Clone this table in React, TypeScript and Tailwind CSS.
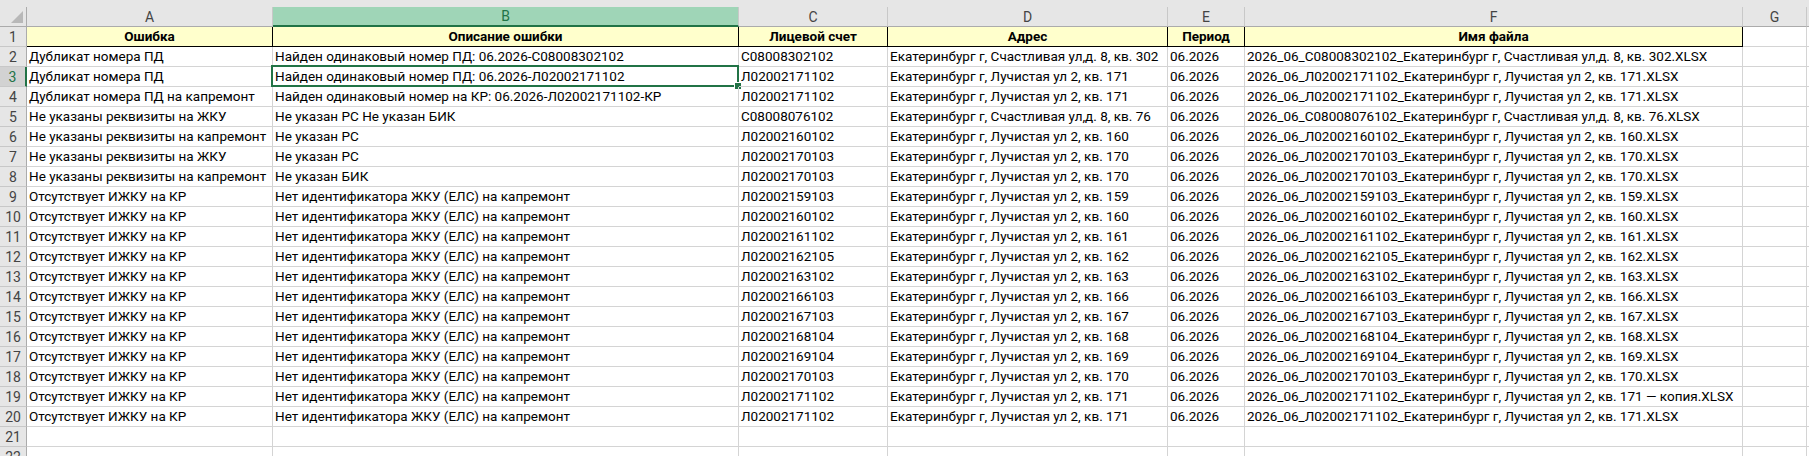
const COLS = ["A", "B", "C", "D", "E", "F", "G"];

const HEAD = ["Ошибка", "Описание ошибки", "Лицевой счет", "Адрес", "Период", "Имя файла"];

const LUCH = "Екатеринбург г, Лучистая ул 2, кв. ";
const NO_ID = "Нет идентификатора ЖКУ (ЕЛС) на капремонт";
const OTS = "Отсутствует ИЖКУ на КР";

function luchRow(err: string, desc: string, acc: string, flat: string, suffix = "") {
  return [err, desc, acc, LUCH + flat, "06.2026", `2026_06_${acc}_${LUCH}${flat}${suffix}.XLSX`];
}

const ROWS: string[][] = [
  [
    "Дубликат номера ПД",
    "Найден одинаковый номер ПД: 06.2026-С08008302102",
    "С08008302102",
    "Екатеринбург г, Счастливая ул,д. 8, кв. 302",
    "06.2026",
    "2026_06_С08008302102_Екатеринбург г, Счастливая ул,д. 8, кв. 302.XLSX",
  ],
  luchRow("Дубликат номера ПД", "Найден одинаковый номер ПД: 06.2026-Л02002171102", "Л02002171102", "171"),
  luchRow("Дубликат номера ПД на капремонт", "Найден одинаковый номер на КР: 06.2026-Л02002171102-КР", "Л02002171102", "171"),
  [
    "Не указаны реквизиты на ЖКУ",
    "Не указан РС Не указан БИК",
    "С08008076102",
    "Екатеринбург г, Счастливая ул,д. 8, кв. 76",
    "06.2026",
    "2026_06_С08008076102_Екатеринбург г, Счастливая ул,д. 8, кв. 76.XLSX",
  ],
  luchRow("Не указаны реквизиты на капремонт", "Не указан РС", "Л02002160102", "160"),
  luchRow("Не указаны реквизиты на ЖКУ", "Не указан РС", "Л02002170103", "170"),
  luchRow("Не указаны реквизиты на капремонт", "Не указан БИК", "Л02002170103", "170"),
  luchRow(OTS, NO_ID, "Л02002159103", "159"),
  luchRow(OTS, NO_ID, "Л02002160102", "160"),
  luchRow(OTS, NO_ID, "Л02002161102", "161"),
  luchRow(OTS, NO_ID, "Л02002162105", "162"),
  luchRow(OTS, NO_ID, "Л02002163102", "163"),
  luchRow(OTS, NO_ID, "Л02002166103", "166"),
  luchRow(OTS, NO_ID, "Л02002167103", "167"),
  luchRow(OTS, NO_ID, "Л02002168104", "168"),
  luchRow(OTS, NO_ID, "Л02002169104", "169"),
  luchRow(OTS, NO_ID, "Л02002170103", "170"),
  luchRow(OTS, NO_ID, "Л02002171102", "171", " — копия"),
  luchRow(OTS, NO_ID, "Л02002171102", "171"),
];

const grid = "grid grid-cols-[27px_246px_466px_149px_280px_77px_498px_64px_1fr]";

function RowHead({ n, active }: { n: number; active?: boolean }) {
  return (
    <div
      className={
        "h-[20px] flex items-center justify-center border-b border-[#c8c8c8] text-[14px] " +
        (active
          ? "bg-[#d2d2d2] text-[#217346] border-r-2 border-r-[#217346]"
          : "bg-[#e6e6e6] text-[#444] border-r border-r-[#ababab]")
      }
    >
      {n}
    </div>
  );
}

export default function App() {
  return (
    <div className="w-[1809px] h-[456px] overflow-hidden bg-white text-[13.5px] leading-none text-black font-['Roboto','Liberation_Sans',sans-serif]">
      {/* strip above column letters */}
      <div className="h-[7px] bg-[#e6e6e6]" />

      {/* column letters */}
      <div className={grid + " text-[14px]"}>
        <div className="h-[20px] bg-[#e6e6e6] border-r border-b border-[#ababab] relative">
          <svg className="absolute right-[3px] bottom-[3px]" width="12" height="12" viewBox="0 0 12 12">
            <polygon points="12,0 12,12 0,12" fill="#b8b8b8" />
          </svg>
        </div>
        {COLS.map((c) => (
          <div
            key={c}
            className={
              "h-[20px] flex items-center justify-center " +
              (c === "B"
                ? "bg-[#9fd5b7] text-[#217346] border-r border-r-[#c8c8c8] border-b-2 border-b-[#217346]"
                : "bg-[#e6e6e6] text-[#444] border-r border-r-[#c8c8c8] border-b border-b-[#ababab]")
            }
          >
            {c}
          </div>
        ))}
        <div className="h-[20px] bg-[#e6e6e6] border-b border-[#ababab]" />
      </div>

      {/* header row 1 */}
      <div className={grid}>
        <RowHead n={1} />
        {HEAD.map((h) => (
          <div
            key={h}
            className="h-[20px] bg-[#ffffcc] border-r border-b border-black flex items-center justify-center font-bold"
          >
            {h}
          </div>
        ))}
        <div className="h-[20px] border-r border-b border-[#d4d4d4]" />
        <div className="h-[20px] border-b border-[#d4d4d4]" />
      </div>

      {/* data rows */}
      {ROWS.map((r, i) => {
        const n = i + 2;
        return (
          <div key={n} className={grid}>
            <RowHead n={n} active={n === 3} />
            {r.map((v, j) => (
              <div
                key={j}
                className="relative h-[20px] border-r border-b border-[#d4d4d4] flex items-center pl-[2px] whitespace-nowrap"
              >
                {v}
                {n === 3 && j === 1 && (
                  <div className="absolute -left-[2px] -top-[2px] -right-[1px] -bottom-[1px] border-2 border-[#217346] pointer-events-none">
                    <div className="absolute -right-[4px] -bottom-[4px] w-[6px] h-[6px] bg-[#217346] outline outline-1 outline-white" />
                  </div>
                )}
              </div>
            ))}
            <div className="h-[20px] border-r border-b border-[#d4d4d4]" />
            <div className="h-[20px] border-b border-[#d4d4d4]" />
          </div>
        );
      })}

      {/* empty rows */}
      {[21, 22].map((n) => (
        <div key={n} className={grid}>
          <RowHead n={n} />
          {COLS.map((c) => (
            <div key={c} className="h-[20px] border-r border-b border-[#d4d4d4]" />
          ))}
          <div className="h-[20px] border-b border-[#d4d4d4]" />
        </div>
      ))}
    </div>
  );
}
